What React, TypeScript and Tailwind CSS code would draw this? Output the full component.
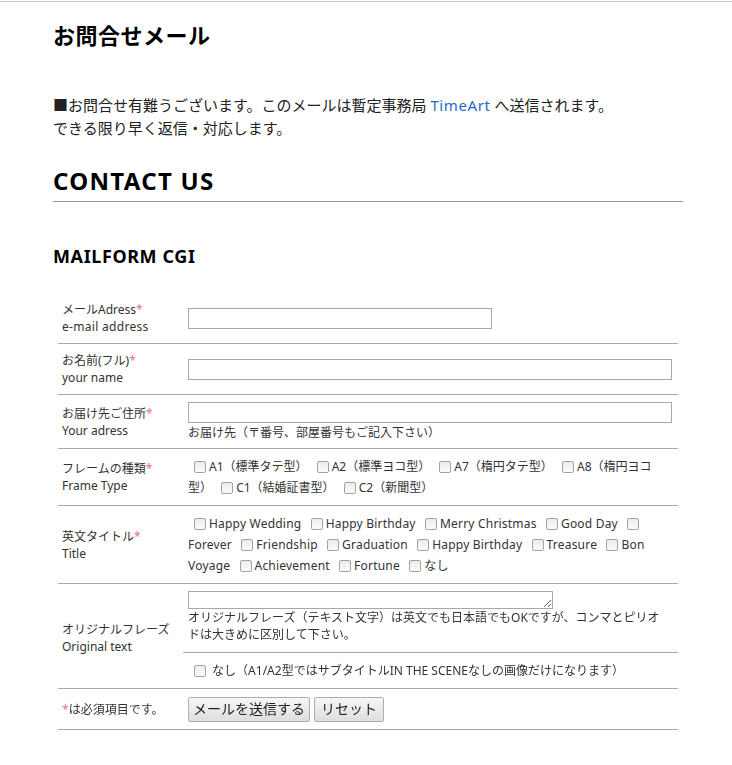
import React from "react";

const Req = () => <span className="text-[#e27575]">*</span>;

const Cb = () => (
  <input
    type="checkbox"
    className="appearance-none inline-block align-[-2px] w-[12px] h-[12px] ml-[6px] mr-[3px] border border-[#a3a3a3] rounded-[2px] bg-gradient-to-b from-[#ececec] to-[#fbfbfb]"
  />
);

const rowCls = "flex border-b border-[#a9a9a9]";
const labelCls = "w-[125px] shrink-0 pl-[4px] flex flex-col justify-center";
const rightCls = "flex-1 pl-[5px] pr-[6px]";

export default function App() {
  return (
    <div className="min-h-[765px] bg-white font-['Noto_Sans','Noto_Sans_CJK_JP',sans-serif] text-[#222]">
      <div className="pt-px">
        <div className="border-t border-[#c4c4c4]" />
      </div>
      <div className="ml-[53px] w-[630px]">
        <h1 className="mt-[18px] text-[22px] leading-[30px] font-bold tracking-[0.5px] text-black">お問合せメール</h1>
        <div className="mt-[44px] text-[15px] leading-[23px] text-[#222]">
          <p>
            ■お問合せ有難うございます。このメールは暫定事務局 <span className="text-[#1e6bc6] tracking-[0.6px]">TimeArt</span> へ送信されます。
          </p>
          <p>できる限り早く返信・対応します。</p>
        </div>
        <h2 className="mt-[25px] pb-[4px] border-b border-[#999] text-[24px] leading-[32px] font-bold tracking-[1.3px] text-black">
          CONTACT US
        </h2>
        <h3 className="mt-[42px] text-[18px] leading-[24px] font-bold tracking-[0.6px] text-black">MAILFORM CGI</h3>

        <div className="mx-[5px] mt-[25px] text-[12px] leading-[17px] text-[#333]">
          {/* email */}
          <div className={`${rowCls} h-[51px]`}>
            <div className={labelCls}>
              <div>
                メールAdress<Req />
              </div>
              <div className="tracking-[0.3px]">e-mail address</div>
            </div>
            <div className={`${rightCls} flex items-center`}>
              <input type="text" className="block w-[304px] h-[21px] border border-[#a9a9a9] bg-white" />
            </div>
          </div>
          {/* name */}
          <div className={`${rowCls} h-[51px]`}>
            <div className={labelCls}>
              <div>
                お名前(フル)<Req />
              </div>
              <div>your name</div>
            </div>
            <div className={`${rightCls} flex items-center`}>
              <input type="text" className="block w-full h-[21px] border border-[#a9a9a9] bg-white" />
            </div>
          </div>
          {/* address */}
          <div className={`${rowCls} h-[54px]`}>
            <div className={labelCls}>
              <div>
                お届け先ご住所<Req />
              </div>
              <div>Your adress</div>
            </div>
            <div className={`${rightCls} pt-[7px]`}>
              <input type="text" className="block w-full h-[21px] border border-[#a9a9a9] bg-white" />
              <div className="mt-px">お届け先（〒番号、部屋番号もご記入下さい）</div>
            </div>
          </div>
          {/* frame type */}
          <div className={`${rowCls} h-[57px]`}>
            <div className={labelCls}>
              <div>
                フレームの種類<Req />
              </div>
              <div>Frame Type</div>
            </div>
            <div className={`${rightCls} pt-[7px] leading-[21px]`}>
              <div className="whitespace-nowrap">
                <Cb />A1（標準タテ型） <Cb />A2（標準ヨコ型） <Cb />A7（楕円タテ型） <Cb />A8（楕円ヨコ
              </div>
              <div className="whitespace-nowrap">
                型） <Cb />C1（結婚証書型） <Cb />C2（新聞型）
              </div>
            </div>
          </div>
          {/* title */}
          <div className={`${rowCls} h-[78px]`}>
            <div className={labelCls}>
              <div>
                英文タイトル<Req />
              </div>
              <div>Title</div>
            </div>
            <div className={`${rightCls} pt-[7px] leading-[21px] tracking-[0.2px]`}>
              <div className="whitespace-nowrap">
                <Cb />Happy Wedding <Cb />Happy Birthday <Cb />Merry Christmas <Cb />Good Day <Cb />
              </div>
              <div className="whitespace-nowrap">
                Forever <Cb />Friendship <Cb />Graduation <Cb />Happy Birthday <Cb />Treasure <Cb />Bon
              </div>
              <div className="whitespace-nowrap">
                Voyage <Cb />Achievement <Cb />Fortune <Cb />なし
              </div>
            </div>
          </div>
          {/* original text */}
          <div className={`${rowCls} h-[105px]`}>
            <div className={labelCls}>
              <div className="mt-[4px]">オリジナルフレーズ</div>
              <div>Original text</div>
            </div>
            <div className="flex-1 flex flex-col">
              <div className="pl-[5px] pr-[6px] pt-[7px] h-[69px] border-b border-[#a9a9a9]">
                <textarea
                  rows={1}
                  className="block w-[365px] h-[18px] border border-[#a9a9a9] bg-white resize"
                />
                <div>
                  オリジナルフレーズ（テキスト文字）は英文でも日本語でもOKですが、コンマとピリオ
                  <br />
                  ドは大きめに区別して下さい。
                </div>
              </div>
              <div className="pl-[5px] pr-[6px] flex-1 flex items-center">
                <span className="whitespace-nowrap">
                  <Cb /> なし（A1/A2型ではサブタイトルIN THE SCENEなしの画像だけになります）
                </span>
              </div>
            </div>
          </div>
          {/* buttons */}
          <div className={`${rowCls} h-[41px]`}>
            <div className={labelCls}>
              <div>
                <Req />は必須項目です。
              </div>
            </div>
            <div className={`${rightCls} flex items-center gap-[4px]`}>
              <button
                type="button"
                className="w-[122px] h-[25px] border border-[#adadad] rounded-[2px] bg-gradient-to-b from-[#f7f7f7] to-[#dedede] text-[14px] text-[#222] leading-none"
              >
                メールを送信する
              </button>
              <button
                type="button"
                className="w-[70px] h-[25px] border border-[#adadad] rounded-[2px] bg-gradient-to-b from-[#f7f7f7] to-[#dedede] text-[14px] text-[#222] leading-none"
              >
                リセット
              </button>
            </div>
          </div>
        </div>
      </div>
    </div>
  );
}
